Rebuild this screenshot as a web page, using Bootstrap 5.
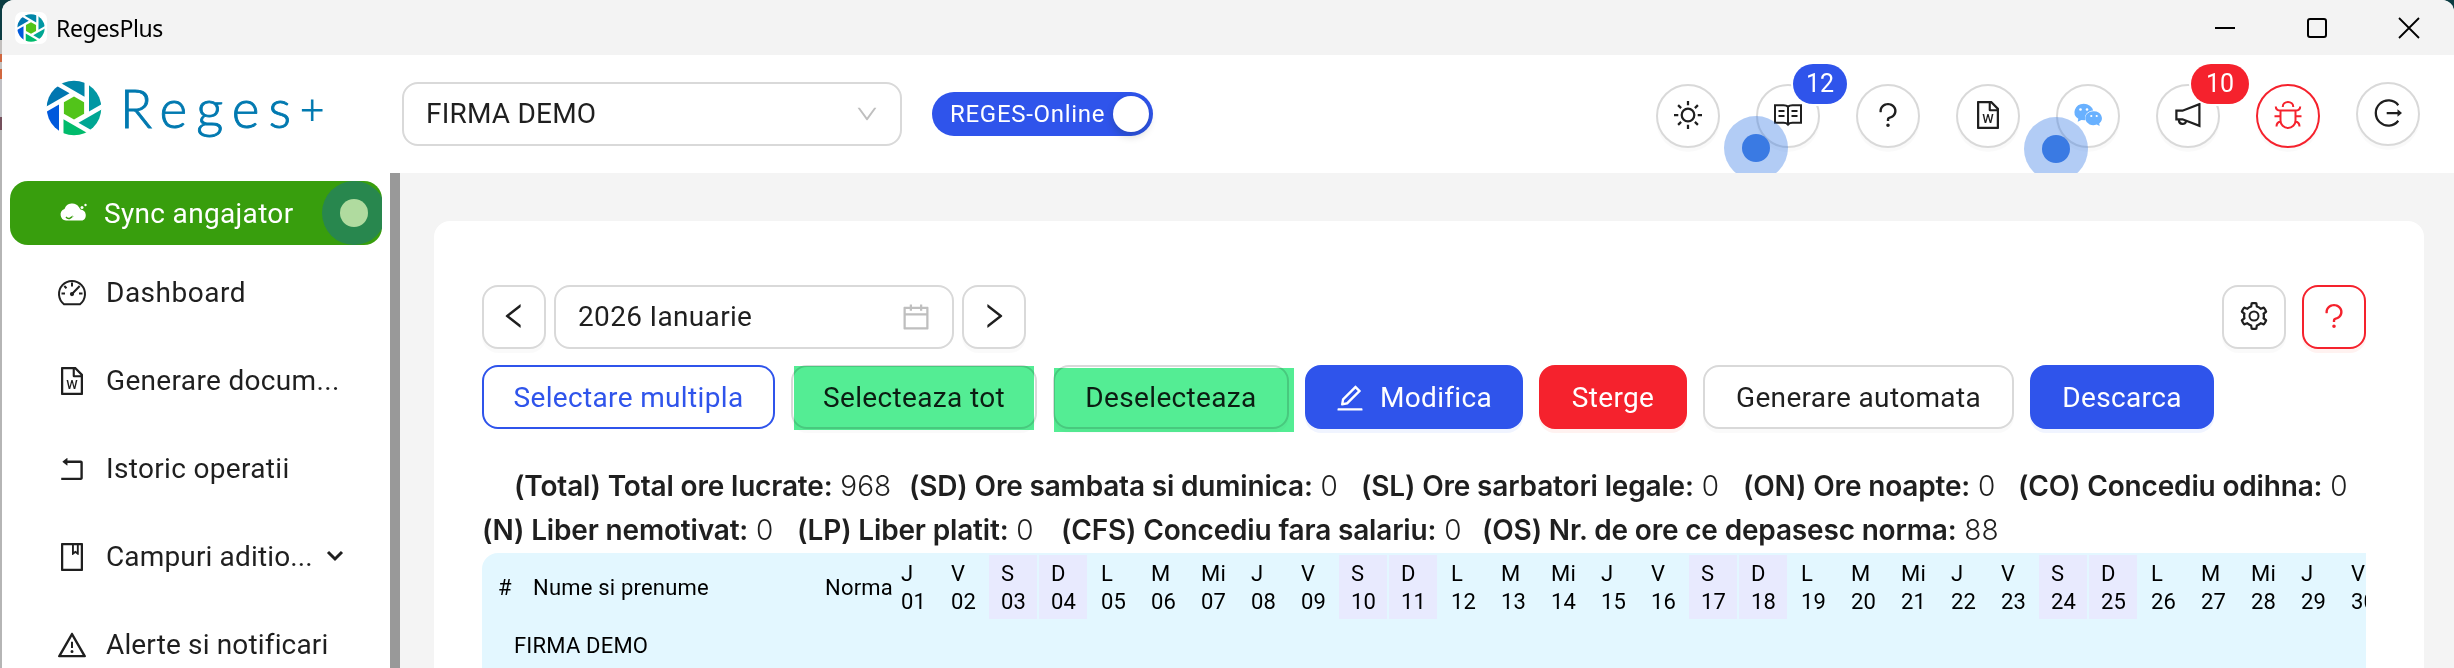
<!DOCTYPE html>
<html lang="ro">
<head>
<meta charset="utf-8">
<title>RegesPlus</title>
<link href="https://cdn.jsdelivr.net/npm/bootstrap@5.3.0/dist/css/bootstrap.min.css" rel="stylesheet">
<style>
:root{--ink:#1f1f1f;--line:#d9d9d9;--blue:#2f54eb;--red:#f5222d}
body{font-family:Roboto,"Liberation Sans",sans-serif;font-size:28px;line-height:44px;letter-spacing:.33px;color:var(--ink);background:linear-gradient(#0b3c42 0 40px,#c3c0be 40px 54px,#d0673f 54px 62px,#c3c0be 62px 69px,#d0673f 69px 79px,#c0c0c4 79px 117px,#74505c 117px 130px,#b5b5b5 130px);width:2454px;height:668px;overflow:hidden}
svg{display:block;flex:none;overflow:visible}
.ic{width:28px;height:28px;fill:currentColor}
.ln{fill:none;stroke:currentColor;stroke-width:2.25}
.app{margin-left:2px;height:668px;border-radius:12px 12px 0 0;background:#f4f4f4}
.titlebar{height:55px;background:#f3f3f3;padding-left:13px;color:#000}
.titlebar .tt{font-family:"Noto Sans","Open Sans",sans-serif;font-size:23px;letter-spacing:-.4px;margin-left:9px}
.logobox{width:32px;height:32px;border-radius:7px;background:#fff;padding:2px}
.wctl{padding-right:34px;gap:70px}
.topbar{height:118px;background:#fff;position:relative;overflow:hidden;padding-left:44px;padding-right:34px}
.brandmark{margin-top:25px}
.brand{font-family:Lato,sans-serif;font-weight:300;-webkit-text-stroke:.9px #0079b0;color:#0079b0;font-size:53px;letter-spacing:9px;margin-left:18px;width:234px;height:54px;line-height:54px;margin-top:26px;white-space:nowrap}
.brand sup{font-size:42px;top:-.1em;letter-spacing:0}
.boxed{height:64px;border:2px solid var(--line);border-radius:16px;background:#fff}
.firm{width:500px;margin:27px 0 0 48px;padding:0 22px 0 22px;letter-spacing:.2px}
.tog{width:221px;height:44px;border-radius:22px;background:var(--blue);color:#fff;font-size:24px;letter-spacing:.7px;margin:37px 0 0 30px;padding:0 4px 0 18px}
.knob{width:36px;height:36px;border-radius:50%;background:#fff;box-shadow:0 4px 8px rgba(0,35,11,.2)}
.tools{gap:36px}
.rnd{width:64px;height:64px;border:2px solid var(--line);border-radius:50%;background:#fff;box-shadow:0 4px 0 rgba(0,0,0,.02);position:relative;margin-top:29px}
.rnd .ic{margin-top:-2px}
.rnd.up{margin-top:27px}
.rnd.danger{color:var(--red);border-color:var(--red)}
.chat{color:#69b1ff}
.cnt{position:absolute;top:-22px;left:35px;height:40px;width:54px;border-radius:20px;font-size:25px;line-height:40px;letter-spacing:0;text-align:center;color:#fff;background:var(--blue);box-shadow:0 0 0 2px #fff}
.cnt.hot{background:var(--red);width:58px;left:33px}
.beacon{position:absolute;width:64px;height:64px;border-radius:50%;background:rgba(56,123,228,.39);display:flex;align-items:center;justify-content:center}
.beacon::after{content:"";width:28px;height:28px;border-radius:50%;background:#3a7ae3}
.b1{left:1722px;top:61px}
.b2{left:2022px;top:62px}
.lower{height:495px}
.side{width:388px;background:#fff;padding:8px 8px 0}
.sync{height:64px;border-radius:18px;background:#389e0d;color:#fff;padding-left:50px;gap:16px;position:relative;overflow:hidden}
.sync>span:not(.beacon){padding-top:1px}
.sync .beacon{right:-4px;top:0;background:#28874e}
.sync .beacon::after{background:#b0db9f}
.item{height:80px;margin-top:8px;padding-left:48px;gap:20px;white-space:nowrap}
.tight{letter-spacing:.15px}
.loose{letter-spacing:.5px}
.caret{margin-left:-6px;margin-top:-3px}
.sbar{width:10px;background:#999}
.pane{margin:48px 30px 0 34px;background:#fff;border-radius:16px 16px 0 0;padding:64px 58px 0 48px;width:1990px;height:447px}
.month{width:400px;padding:0 22px 0 22px}
.month svg{color:#bfbfbf}
.sq{width:64px;box-shadow:0 4px 0 rgba(0,0,0,.02)}
.sq .ic{margin-top:-2px}
.sq.help{color:var(--red);border-color:var(--red);box-shadow:0 4px 0 rgba(255,38,5,.06)}
.flip{transform:scaleX(-1)}
.act{height:64px;border-radius:16px;border:2px solid var(--line);line-height:60px;padding:1px 0 0;color:var(--ink);background:#fff;font-size:28px;letter-spacing:.35px;box-shadow:0 4px 0 rgba(0,0,0,.02);position:relative;white-space:nowrap}
.act.o{color:var(--blue);border-color:var(--blue);box-shadow:none}
.act.b{background:var(--blue);border-color:var(--blue);color:#fff;box-shadow:0 4px 0 rgba(5,60,255,.06)}
.act.r{background:var(--red);border-color:var(--red);color:#fff;box-shadow:0 4px 0 rgba(255,38,5,.06)}
.w1{width:293px}.w2{width:246px}.w3{width:236px}.w4{width:218px}.w5{width:148px}.w6{width:311px}.w7{width:184px}
.hl{position:absolute;width:240px;height:64px;background:#54ed94;mix-blend-mode:multiply}
.h1a{left:1px;top:-1px}
.h2a{left:-1px;top:1px}
.stats{margin-top:35px;white-space:nowrap;font-family:Inter,sans-serif;font-weight:300;letter-spacing:0}
.stats b{font-weight:600;letter-spacing:-.17px}
.stats>div{height:44px}
.stats>div:first-child{padding-left:32px}
.s395{width:395px}.s452{width:452px}.s382{width:382px}.s275{width:275px}
.s315{width:315px}.s264{width:264px}.s421{width:421px}
.grid{margin-top:1px;height:115px;background:#e3f7ff;border-radius:16px 0 0 0;color:#000;font-size:22px;line-height:28px;letter-spacing:.2px;overflow:hidden;padding-top:2px}
.ghead{height:64px;padding-left:16px}
.ghead>span{padding-top:1px}
.c1{width:35px}.c2{width:292px}.c3{width:64px}
.day{width:48px;height:64px;padding:5px 0 0 12px;flex:none;margin-right:2px}
.we{background:#e8eafe}
.grp{padding:13px 0 0 32px}
</style>
</head>
<body>
<svg width="0" height="0" class="position-absolute">
<defs>
<clipPath id="disc"><circle r="27.3"/></clipPath>
<path id="blade" d="M15 3.5V-40H40V-11z"/>
<symbol id="logo" viewBox="-28 -28 56 56"><g clip-path="url(#disc)">
<use href="#blade" fill="#0097a3"/><use href="#blade" fill="#00a693" transform="rotate(60)"/><use href="#blade" fill="#00bb6c" transform="rotate(120)"/><use href="#blade" fill="#0059dc" transform="rotate(180)"/><use href="#blade" fill="#0076b0" transform="rotate(240)"/><use href="#blade" fill="#0086a8" transform="rotate(300)"/></g>
<path fill="#52c41a" d="M0-11.6L10.1-5.8V5.8L0 11.6-10.1 5.8V-5.8z"/></symbol>
<symbol id="word" viewBox="64 64 896 896"><path d="M854.6 288.6L639.4 73.4c-6-6-14.1-9.4-22.6-9.4H192c-17.7 0-32 14.3-32 32v832c0 17.7 14.3 32 32 32h640c17.7 0 32-14.3 32-32V311.3c0-8.5-3.4-16.7-9.4-22.7zM790.2 326H602V137.8L790.2 326zm1.8 562H232V136h302v216a42 42 0 0042 42h216v494z"/><text x="512" y="768" font-size="415" font-weight="500" letter-spacing="0" text-anchor="middle">W</text></symbol>
<symbol id="quest" viewBox="64 64 896 896"><path d="M764 280.9c-14-30.6-33.9-58.1-59.3-81.6C653.1 151.4 584.6 125 512 125s-141.1 26.4-192.7 74.2c-25.4 23.6-45.3 51-59.3 81.7-14.6 32-22 65.9-22 100.9v27c0 6.2 5 11.2 11.2 11.2h54c6.2 0 11.2-5 11.2-11.2v-27c0-99.5 88.6-180.4 197.6-180.4s197.6 80.9 197.6 180.4c0 40.8-14.5 79.2-42 111.2-27.2 31.7-65.6 54.4-108.1 64-24.3 5.5-46.2 19.2-61.7 38.8a110.85 110.85 0 00-23.9 68.6v31.4c0 6.2 5 11.2 11.2 11.2h54c6.2 0 11.2-5 11.2-11.2v-31.4c0-15.7 10.9-29.5 26-32.9 58.4-13.2 111.4-44.7 149.3-88.7 19.1-22.3 34-47.1 44.3-74 10.7-27.9 16.1-57.2 16.1-87 0-35-7.4-69-22-100.9zM512 787c-30.900 0-56 25.100-56 56s25.100 56 56 56 56-25.100 56-56-25.100-56-56-56z"/></symbol>
<symbol id="chev" viewBox="64 64 896 896"><path d="M724 218.300V141c0-6.700-7.700-10.400-12.900-6.300L260.300 486.800a31.860 31.860 0 000 50.300l450.800 352.100c5.300 4.100 12.900.4 12.900-6.300v-77.300c0-4.900-2.300-9.600-6.100-12.600l-360-281 360-281.100c3.800-3 6.100-7.700 6.100-12.600z"/></symbol>
</defs></svg>

<div class="app overflow-hidden">
  <header class="titlebar d-flex align-items-center">
    <div class="logobox"><svg width="28" height="28"><use href="#logo"/></svg></div>
    <span class="tt">RegesPlus</span>
    <div class="wctl ms-auto d-flex">
      <svg width="22" height="22" class="ln"><path d="M1 11H21" stroke-width="2"/></svg>
      <svg width="22" height="22" class="ln"><rect x="2" y="2" width="18" height="18" rx="2" stroke-width="2"/></svg>
      <svg width="22" height="22" class="ln"><path d="M1 1L21 21M21 1L1 21" stroke-width="1.8"/></svg>
    </div>
  </header>

  <nav class="topbar d-flex align-items-start">
    <svg width="56" height="56" class="brandmark"><use href="#logo"/></svg>
    <div class="brand">Reges<sup>+</sup></div>
    <div class="firm boxed d-flex align-items-center justify-content-between"><span>FIRMA DEMO</span>
      <svg width="22" height="22" viewBox="64 64 896 896" fill="#bfbfbf"><path d="M884 256h-75c-5.1 0-9.9 2.5-12.9 6.6L512 654.2 227.900 262.600c-3-4.100-7.800-6.600-12.900-6.600h-75c-6.500 0-10.300 7.400-6.500 12.700l352.600 486.100c12.800 17.600 39 17.600 51.700 0l352.600-486.100c3.900-5.300.1-12.700-6.400-12.700z"/></svg></div>
    <div class="tog d-flex align-items-center justify-content-between"><span>REGES-Online</span><span class="knob"></span></div>
    <div class="tools ms-auto d-flex">
      <div class="rnd d-flex align-items-center justify-content-center"><svg class="ic ln"><circle cx="14" cy="14" r="6.300"/><path d="M14 0V4.300M14 23.700V28M0 14H4.300M23.700 14H28M4.100 4.100L7.100 7.100M20.900 20.900L23.900 23.900M4.100 23.900L7.100 20.900M20.900 7.100L23.900 4.100"/></svg></div>
      <div class="rnd d-flex align-items-center justify-content-center"><svg class="ic ln"><path d="M1 4.200H9.500Q12.500 4.200 14 5.800Q15.500 4.200 18.500 4.200H27V21.800H18.500Q15.500 21.800 14 23.600Q12.500 21.800 9.500 21.800H1zM14 5.800V23M4.500 10H10.500M4.500 15H10.500M17.500 10H23.500M17.500 15H23.500" stroke-width="2"/></svg><span class="cnt">12</span></div>
      <div class="rnd d-flex align-items-center justify-content-center"><svg class="ic"><use href="#quest"/></svg></div>
      <div class="rnd d-flex align-items-center justify-content-center"><svg class="ic"><use href="#word"/></svg></div>
      <div class="rnd d-flex align-items-center justify-content-center"><svg class="ic chat"><path d="M9.700 2.800a9.700 8.300 0 0 1 9.500 6.700a8.800 7.400 0 0 0-7.800 9.800l-4-.4L3.700 20.700l.6-3A9.700 8.300 0 0 1 9.700 2.800z"/><path d="M20 10.300a8 7 0 0 1 5.200 12.200l.5 2.500-3-1.400A8 7 0 1 1 20 10.300z"/><g fill="#fff"><circle cx="6.500" cy="8.500" r="1.300"/><circle cx="13" cy="8.500" r="1.300"/><circle cx="17.300" cy="15" r="1.100"/><circle cx="22.700" cy="15" r="1.100"/></g></svg></div>
      <div class="rnd d-flex align-items-center justify-content-center"><svg class="ic ln"><path d="M2.400 9.700H8.500L25.400 3.200V24.800L8.500 18.300H2.400zM5 18.500V20a3.600 3.300 0 0 0 7 .6V19.500"/></svg><span class="cnt hot">10</span></div>
      <div class="rnd danger d-flex align-items-center justify-content-center"><svg class="ic ln"><path d="M8.800 6V5.500a5.200 4.600 0 0 1 10.400 0V6M6.500 9.600H21.500V19.500a7.500 7.500 0 0 1-15 0zM1.800 5.500Q1.800 9.600 6.500 9.600M26.200 5.500Q26.200 9.600 21.500 9.600M.5 15.200H6.500M21.500 15.200H27.500M7 20.500Q2.500 21 2.500 25.500M21 20.500Q25.500 21 25.500 25.500" stroke-width="2"/></svg></div>
      <div class="rnd up d-flex align-items-center justify-content-center"><svg class="ic ln"><path d="M24.300 6.200a12.600 12.600 0 1 0 0 15.600" stroke-width="2.300"/><path d="M12.700 14H24.500"/><path d="M23.500 10.300L28 14 23.500 17.700z" fill="currentColor" stroke="none"/></svg></div>
    </div>
    <span class="beacon b1"></span>
    <span class="beacon b2"></span>
  </nav>

  <div class="lower d-flex">
    <aside class="side">
      <div class="sync d-flex align-items-center"><svg width="28" height="28" fill="#fff"><path d="M6 21.500a6 6 0 0 1-1.500-11.600A8.200 8.200 0 0 1 19 8.200l1.500 2.300A5.800 5.800 0 0 1 22.500 21.500z"/><circle cx="22" cy="8.500" r="1.500"/><circle cx="25.500" cy="6" r="1.200"/><path d="M6 18q2 2.500 4.500.8T12.500 17.500" fill="none" stroke="#389e0d" stroke-width="1.500"/></svg><span>Sync angajator</span><span class="beacon"></span></div>
      <div class="item d-flex align-items-center"><svg class="ic ln"><path d="M6 25.200H22A13 13 0 1 0 6 25.200zM14 3.500V7.500M6.300 7L8.500 9.200M3.500 14.500H7M21 14.500H24.500M21.700 7L14 15" stroke-width="2"/><circle cx="14" cy="15" r="1" fill="currentColor"/></svg><span class="loose">Dashboard</span></div>
      <div class="item d-flex align-items-center"><svg class="ic"><use href="#word"/></svg><span>Generare docum...</span></div>
      <div class="item d-flex align-items-center"><svg class="ic" viewBox="64 64 896 896"><path d="M793 242H366v-74c0-6.700-7.700-10.400-12.900-6.300l-142 112a8 8 0 000 12.600l142 112c5.200 4.100 12.900.4 12.900-6.300v-74h415v470H175c-4.400 0-8 3.600-8 8v60c0 4.400 3.600 8 8 8h618c35.300 0 64-28.700 64-64V306c0-35.300-28.700-64-64-64z"/></svg><span>Istoric operatii</span></div>
      <div class="item d-flex align-items-center"><svg class="ic" viewBox="64 64 896 896"><path d="M832 64H192c-17.700 0-32 14.300-32 32v832c0 17.700 14.300 32 32 32h640c17.700 0 32-14.300 32-32V96c0-17.700-14.300-32-32-32zm-260 72h96v209.900L621.500 312 572 347.400V136zm220 752H232V136h280v296.900c0 3.300 1 6.600 3 9.300a15.900 15.900 0 0022.300 3.700l83.800-59.900 81.400 59.400c2.700 2 6 3.100 9.400 3.100 8.800 0 16-7.200 16-16V136h64v752z"/></svg><span class="tight">Campuri aditio...</span><svg width="16" height="10" class="ln caret"><path d="M1 1L8 8L15 1" stroke-width="3"/></svg></div>
      <div class="item d-flex align-items-center"><svg class="ic" viewBox="64 64 896 896"><path d="M464 720a48 48 0 1096 0 48 48 0 10-96 0zm16-304v184c0 4.400 3.600 8 8 8h48c4.400 0 8-3.600 8-8V416c0-4.400-3.600-8-8-8h-48c-4.400 0-8 3.600-8 8zm475.700 440l-416-720c-6.200-10.700-16.900-16-27.700-16s-21.600 5.300-27.700 16l-416 720C56 877.400 71.400 904 96 904h832c24.600 0 40-26.600 27.700-48zm-783.500-27.900L512 239.900l339.800 588.200H172.200z"/></svg><span class="tight">Alerte si notificari</span></div>
    </aside>
    <div class="sbar"></div>
    <main class="pane">
      <div class="d-flex gap-2">
        <div class="boxed sq d-flex align-items-center justify-content-center"><svg class="ic"><use href="#chev"/></svg></div>
        <div class="boxed month d-flex align-items-center justify-content-between"><span>2026 Ianuarie</span><svg class="ic" viewBox="64 64 896 896"><path d="M880 184H712v-64c0-4.400-3.600-8-8-8h-56c-4.400 0-8 3.600-8 8v64H384v-64c0-4.400-3.600-8-8-8h-56c-4.400 0-8 3.600-8 8v64H144c-17.700 0-32 14.300-32 32v664c0 17.700 14.300 32 32 32h736c17.700 0 32-14.300 32-32V216c0-17.700-14.300-32-32-32zm-40 656H184V460h656v380zM184 392V256h128v48c0 4.400 3.600 8 8 8h56c4.400 0 8-3.600 8-8v-48h256v48c0 4.400 3.600 8 8 8h56c4.400 0 8-3.600 8-8v-48h128v136H184z"/></svg></div>
        <div class="boxed sq d-flex align-items-center justify-content-center"><svg class="ic flip"><use href="#chev"/></svg></div>
        <div class="d-flex gap-3 ms-auto">
          <div class="boxed sq d-flex align-items-center justify-content-center"><svg class="ic" viewBox="64 64 896 896"><path fill-rule="evenodd" d="M924.8 625.7l-65.5-56c3.1-19 4.7-38.4 4.7-57.8s-1.6-38.8-4.700-57.800l65.500-56a32.030 32.030 0 009.300-35.200l-.9-2.600a443.740 443.740 0 00-79.700-137.900l-1.800-2.100a32.120 32.120 0 00-35.100-9.500l-81.300 28.900c-30-24.600-63.500-44-99.700-57.600l-15.700-85a32.050 32.050 0 00-25.800-25.700l-2.700-.5c-52.100-9.400-106.900-9.400-159 0l-2.700.5a32.050 32.050 0 00-25.800 25.700l-15.800 85.400a351.860 351.860 0 00-99 57.400l-81.900-29.100a32 32 0 00-35.100 9.500l-1.800 2.100a446.020 446.020 0 00-79.700 137.900l-.9 2.600c-4.500 12.500-.8 26.500 9.300 35.200l66.300 56.600c-3.100 18.800-4.600 38-4.600 57.100 0 19.200 1.500 38.400 4.600 57.100L99 625.500a32.030 32.030 0 00-9.300 35.200l.9 2.600c18.100 50.400 44.900 96.900 79.700 137.900l1.800 2.100a32.120 32.120 0 0035.100 9.500l81.900-29.100c29.800 24.500 63.100 43.900 99 57.400l15.800 85.400a32.050 32.050 0 0025.800 25.700l2.700.5a449.400 449.400 0 00159 0l2.700-.5a32.050 32.050 0 0025.800-25.700l15.700-85a350 350 0 0099.700-57.600l81.300 28.900a32 32 0 0035.100-9.500l1.800-2.100c34.800-41.100 61.600-87.500 79.700-137.900l.9-2.600c4.500-12.300.8-26.300-9.300-35zM788.300 465.900c2.500 15.100 3.800 30.600 3.800 46.100s-1.300 31-3.800 46.100l-6.600 40.100 74.700 63.900a370.030 370.030 0 01-42.600 73.600L721 702.800l-31.400 25.800c-23.900 19.600-50.500 35-79.300 45.800l-38.100 14.300-17.900 97a377.500 377.500 0 01-85 0l-17.900-97.200-37.800-14.500c-28.500-10.800-55-26.200-78.700-45.700l-31.400-25.900-93.400 33.200c-17-22.900-31.200-47.600-42.600-73.600l75.500-64.500-6.500-40c-2.400-14.900-3.700-30.300-3.700-45.500 0-15.300 1.200-30.600 3.700-45.500l6.500-40-75.500-64.500c11.300-26.100 25.600-50.700 42.600-73.600l93.400 33.200 31.400-25.900c23.700-19.500 50.200-34.900 78.700-45.700l37.900-14.300 17.900-97.200c28.100-3.200 56.800-3.200 85 0l17.900 97 38.100 14.300c28.700 10.800 55.400 26.200 79.300 45.800l31.400 25.800 92.800-32.900c17 22.900 31.200 47.600 42.600 73.600L781.800 426l6.500 39.900z"/><circle cx="512" cy="512" r="144" fill="none" stroke="currentColor" stroke-width="64"/></svg></div>
          <div class="boxed sq help d-flex align-items-center justify-content-center"><svg class="ic"><use href="#quest"/></svg></div>
        </div>
      </div>
      <div class="d-flex gap-3 mt-3">
        <button class="act o w1">Selectare multipla</button>
        <button class="act w2">Selecteaza tot<span class="hl h1a"></span></button>
        <button class="act w3">Deselecteaza<span class="hl h2a"></span></button>
        <button class="act b w4 d-flex align-items-center justify-content-center gap-3"><svg class="ic" viewBox="64 64 896 896"><path d="M257.700 752c2 0 4-.2 6-.5L431.900 722c2-.4 3.900-1.300 5.300-2.800l423.900-423.900a9.960 9.960 0 000-14.100L694.900 114.900c-1.900-1.900-4.400-2.900-7.100-2.900s-5.200 1-7.100 2.900L256.800 538.800c-1.500 1.500-2.400 3.300-2.800 5.300l-29.500 168.200a33.500 33.500 0 009.400 29.800c6.600 6.400 14.900 9.900 23.800 9.900zm67.400-174.400L687.800 215l73.300 73.300-362.700 362.600-88.900 15.700 15.600-89zM880 836H144c-17.700 0-32 14.300-32 32v36c0 4.400 3.600 8 8 8h784c4.400 0 8-3.600 8-8v-36c0-17.700-14.300-32-32-32z"/></svg>Modifica</button>
        <button class="act r w5">Sterge</button>
        <button class="act w6">Generare automata</button>
        <button class="act b w7">Descarca</button>
      </div>
      <div class="stats">
        <div class="d-flex"><span class="s395"><b>(Total) Total ore lucrate:</b> 968</span><span class="s452"><b>(SD) Ore sambata si duminica:</b> 0</span><span class="s382"><b>(SL) Ore sarbatori legale:</b> 0</span><span class="s275"><b>(ON) Ore noapte:</b> 0</span><span><b>(CO) Concediu odihna:</b> 0</span></div>
        <div class="d-flex"><span class="s315"><b>(N) Liber nemotivat:</b> 0</span><span class="s264"><b>(LP) Liber platit:</b> 0</span><span class="s421"><b>(CFS) Concediu fara salariu:</b> 0</span><span><b>(OS) Nr. de ore ce depasesc norma:</b> 88</span></div>
      </div>
      <div class="grid">
        <div class="ghead d-flex align-items-center"><span class="c1 flex-shrink-0">#</span><span class="c2 flex-shrink-0">Nume si prenume</span><span class="c3 flex-shrink-0">Norma</span><div class="d-flex flex-shrink-0" id="days"></div></div>
        <div class="grp">FIRMA DEMO</div>
      </div>
    </main>
  </div>
</div>
<script>
const names = ['L', 'M', 'Mi', 'J', 'V', 'S', 'D'];
let cells = '';
for (let d = 1; d <= 30; d++) {
  const w = (d + 2) % 7;
  cells += `<div class="day${w > 4 ? ' we' : ''}">${names[w]}<br>${String(d).padStart(2, '0')}</div>`;
}
document.getElementById('days').innerHTML = cells;
</script>
</body>
</html>
